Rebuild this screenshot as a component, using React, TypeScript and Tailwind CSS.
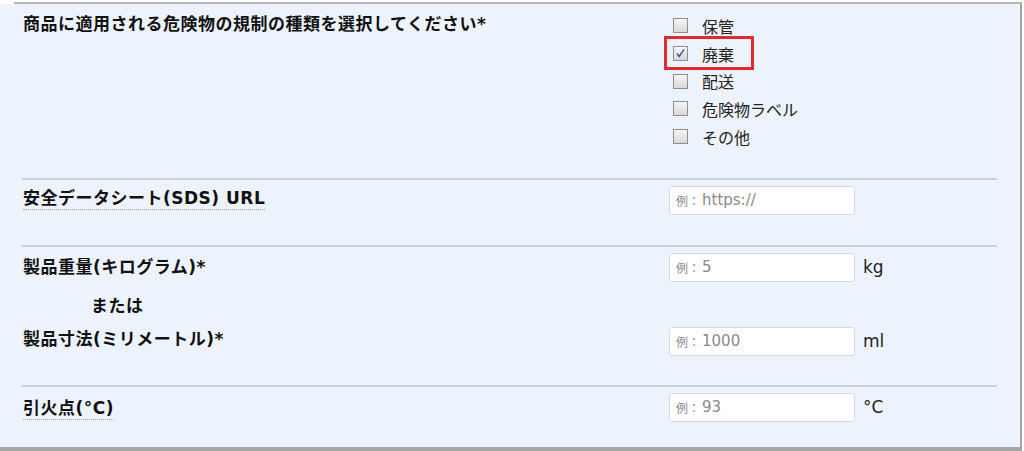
import React from "react";

const FONT = '"DejaVu Sans", "Noto Sans CJK JP", sans-serif';

function Checkbox({ checked }: { checked?: boolean }) {
  return (
    <div className="relative w-[15px] h-[15px] border border-[#8f8f8f] bg-gradient-to-b from-[#f6f6f6] to-[#d8d8d8] shrink-0">
      {checked && (
        <svg viewBox="0 0 14 14" className="absolute left-0 top-0 w-[13px] h-[13px]">
          <path d="M3.2 7 L5.6 10.2 L10.8 2.6" fill="none" stroke="#4a4fb0" strokeWidth="1.6" />
        </svg>
      )}
    </div>
  );
}

function Input({ ph }: { ph: string }) {
  return (
    <div className="w-[186px] h-[29px] bg-white border border-[#d6dae0] rounded-[3px] flex items-center pl-[6px] text-[#8a8a8a]">
      <span className="text-[12px] mr-[2px]" style={{ fontFamily: '"Noto Sans CJK JP", sans-serif' }}>例：</span>
      <span className="text-[15px]">{ph}</span>
    </div>
  );
}

function Sep() {
  return <div className="ml-[22px] w-[975px] h-[2px] bg-[#cdd1d7]" />;
}

export default function App() {
  const opts = ["保管", "廃棄", "配送", "危険物ラベル", "その他"];
  return (
    <div className="w-[1024px] h-[451px] bg-white relative overflow-hidden" style={{ fontFamily: FONT }}>
      <div className="w-[1022px] h-[451px] flex flex-col">
        <div className="h-[2px] bg-white" />
        <div className="h-[2px] ml-[14px] bg-[#b4b6b9]" />
        <div className="flex-1 flex flex-col bg-[#edf3fd] border-r-2 border-[#a3a3a3] relative">
          {/* Row 1 */}
          <div className="h-[174px] flex">
            <div className="w-[669px] pl-[23px] pt-[8px]">
              <div className="text-[17px] font-bold leading-[24px] text-[#111] tracking-[0.5px]">
                商品に適用される危険物の規制の種類を選択してください*
              </div>
            </div>
            <div className="pt-[8px] pl-[4px] flex flex-col">
              {opts.map((o, i) => (
                <div key={o} className="h-[27.7px] flex items-center gap-[14px]">
                  <Checkbox checked={i === 1} />
                  <span className="text-[16px] text-[#222]" style={{ fontFamily: '"Noto Sans CJK JP", sans-serif' }}>{o}</span>
                </div>
              ))}
            </div>
            <div className="absolute left-[664px] top-[32px] w-[90px] h-[34px] border-[3px] border-[#e02a2e]" />
          </div>
          <Sep />
          {/* Row 2 */}
          <div className="h-[65px] flex">
            <div className="w-[669px] pl-[23px] pt-[7px]">
              <span className="inline-block text-[17px] font-bold leading-[22px] tracking-[0.5px] text-[#111] border-b border-dotted border-[#9a9a9a]">
                安全データシート(SDS) URL
              </span>
            </div>
            <div className="pt-[6px]">
              <Input ph="https://" />
            </div>
          </div>
          <Sep />
          {/* Row 3 */}
          <div className="h-[138px] flex">
            <div className="w-[669px] pl-[23px] pt-[9px] flex flex-col text-[17px] font-bold tracking-[0.5px] text-[#111] leading-[22px]">
              <div>製品重量(キログラム)*</div>
              <div className="mt-[17px] pl-[68px]">または</div>
              <div className="mt-[11px]">製品寸法(ミリメートル)*</div>
            </div>
            <div className="pt-[6px] flex flex-col">
              <div className="flex items-center gap-[8px]">
                <Input ph="5" />
                <span className="text-[17px] text-[#222]">kg</span>
              </div>
              <div className="flex items-center gap-[8px] mt-[45px]">
                <Input ph="1000" />
                <span className="text-[17px] text-[#222]">ml</span>
              </div>
            </div>
          </div>
          <Sep />
          {/* Row 4 */}
          <div className="flex-1 flex">
            <div className="w-[669px] pl-[23px] pt-[10px]">
              <span className="inline-block text-[17px] font-bold leading-[22px] tracking-[0.5px] text-[#111] border-b border-dotted border-[#9a9a9a]">
                引火点(°C)
              </span>
            </div>
            <div className="pt-[6px]">
              <div className="flex items-center gap-[8px]">
                <Input ph="93" />
                <span className="text-[17px] text-[#222]">°C</span>
              </div>
            </div>
          </div>
        </div>
        <div className="h-[4px] bg-[#a6a6a6]" />
      </div>
    </div>
  );
}
